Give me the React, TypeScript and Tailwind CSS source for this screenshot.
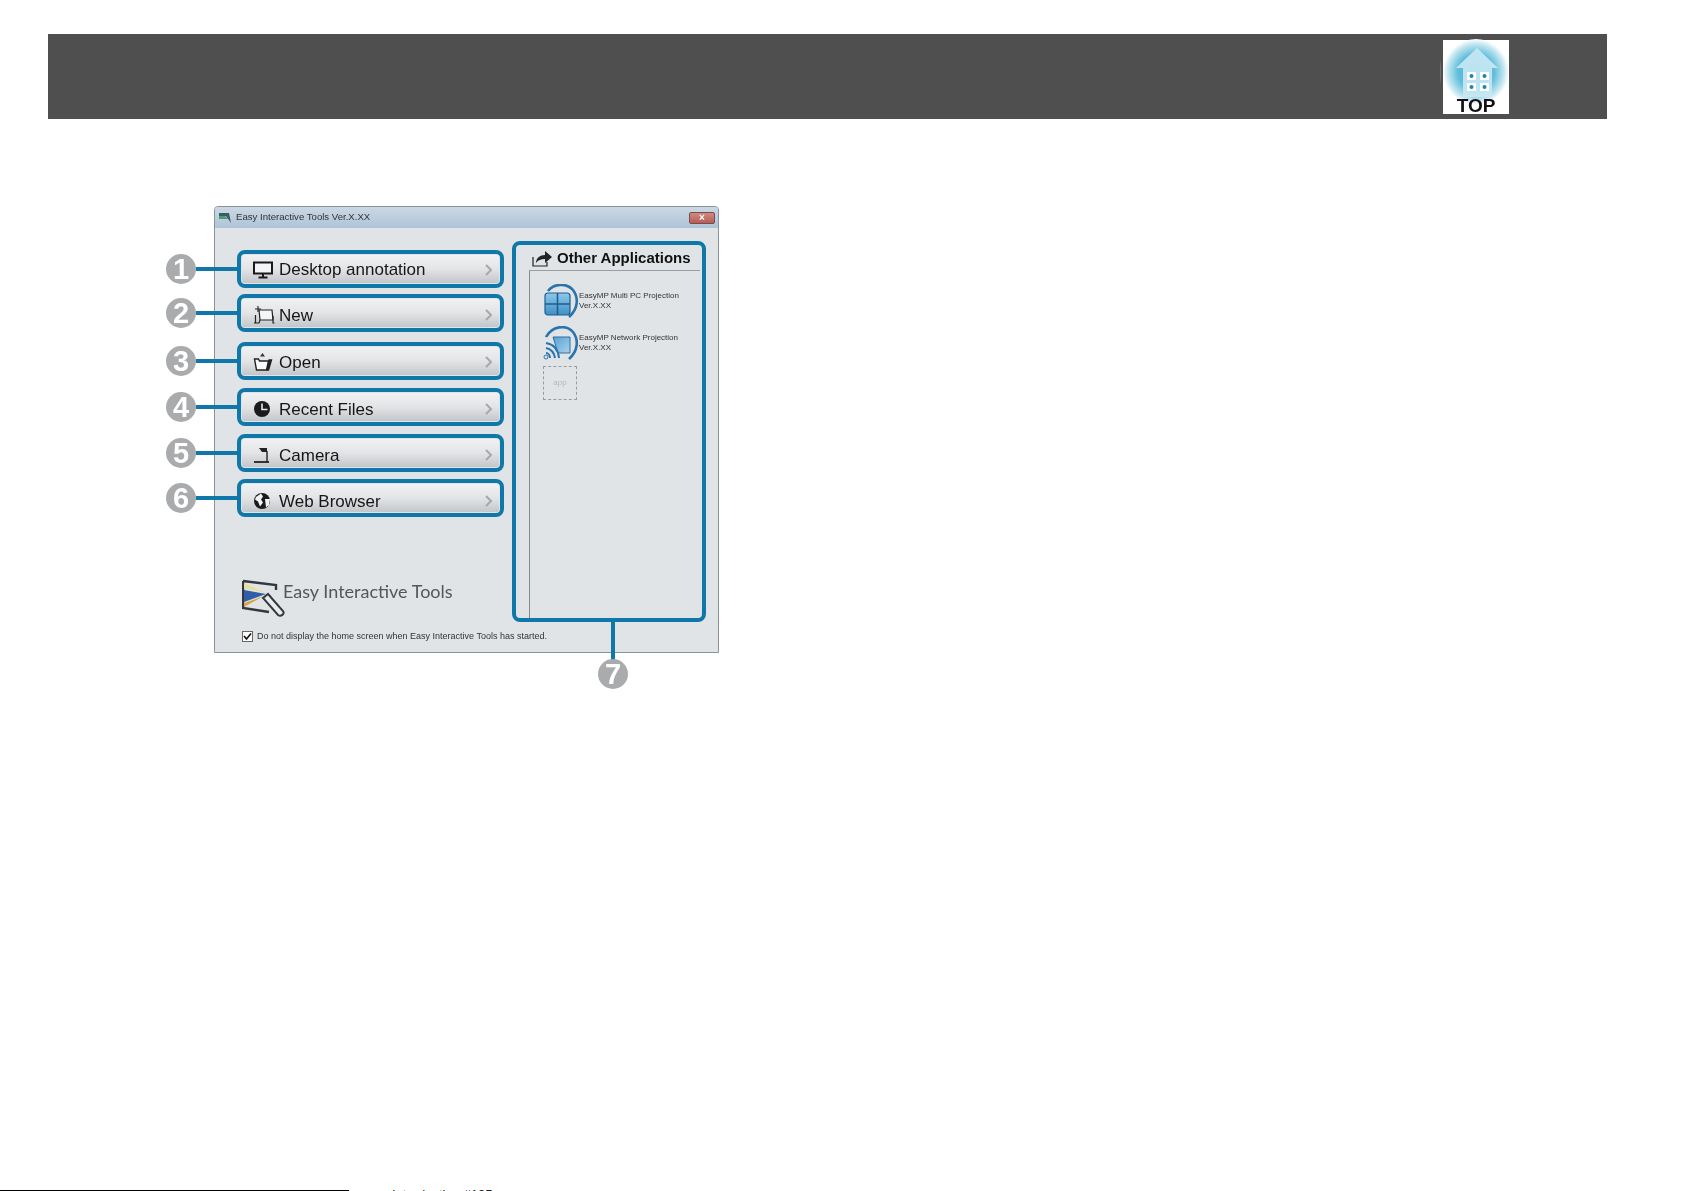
import React from "react";

const BLUE = "#0f78a8";

function Badge({ n }: { n: string }) {
  return (
    <div className="flex h-[30px] w-[30px] items-center justify-center rounded-full bg-[#a9abad] text-[29px] font-bold leading-none text-white [font-family:'Liberation_Sans',sans-serif]">
      {n}
    </div>
  );
}

function Monitor() {
  return (
    <svg width="20" height="18" viewBox="0 0 20 18" fill="none">
      <rect x="1" y="1.5" width="18" height="11" fill="#f4f5f6" stroke="#1a1a1a" strokeWidth="2" />
      <path d="M10 13v3M5.5 16.5h9" stroke="#1a1a1a" strokeWidth="2" />
    </svg>
  );
}
function NewIcon() {
  return (
    <svg width="22" height="20" viewBox="0 0 22 20" fill="none" stroke="#222" strokeWidth="1.2">
      <path d="M6 5h13l1 10H7z" fill="#f4f5f6" />
      <path d="M2.5 10v8M1 18h5l1-3M20 11v7h1.5" />
      <path d="M5 1v6M2 4h6" strokeWidth="1.1" />
    </svg>
  );
}
function OpenIcon() {
  return (
    <svg width="20" height="20" viewBox="0 0 20 20" fill="none" stroke="#222" strokeWidth="1.4">
      <path d="M1.500 7h4l1 2h9l-2 9H3.500z" fill="#fbfbfb" />
      <path d="M15.500 8h3l-3 10h-2" fill="#222" />
      <path d="M9.500 1l2.500 3.500H7z" fill="#333" stroke="none" />
    </svg>
  );
}
function Clock() {
  return (
    <svg width="18" height="18" viewBox="0 0 18 18">
      <circle cx="9" cy="9" r="8" fill="#1b1b1b" />
      <path d="M9 3.500V9.500h5.500" stroke="#e4e6e8" strokeWidth="1.6" fill="none" />
    </svg>
  );
}
function CameraIcon() {
  return (
    <svg width="18" height="18" viewBox="0 0 18 18" fill="none">
      <path d="M1 16h15" stroke="#222" strokeWidth="1.8" />
      <path d="M14 5v11" stroke="#222" strokeWidth="1.4" />
      <path d="M6 2h8v4H9z" fill="#222" />
    </svg>
  );
}
function Globe() {
  return (
    <svg width="18" height="18" viewBox="0 0 18 18">
      <circle cx="9" cy="9" r="8" fill="#1b1b1b" />
      <path d="M3 5l5-3.500 2 3-2 3 2 3-3 4-2-5-3-2zM12 7l5 0-1 6-3 2.500z" fill="#f2f3f4" />
    </svg>
  );
}

const rows = [
  { n: "1", label: "Desktop annotation", icon: <Monitor />, cls: "mt-[22px]", inner: "pt-[1px]" },
  { n: "2", label: "New", icon: <NewIcon />, cls: "mt-[6px]", inner: "pt-[4px]" },
  { n: "3", label: "Open", icon: <OpenIcon />, cls: "mt-[10px]", inner: "pt-[2px]" },
  { n: "4", label: "Recent Files", icon: <Clock />, cls: "mt-[8px]", inner: "pt-[4px]" },
  { n: "5", label: "Camera", icon: <CameraIcon />, cls: "mt-[8px]", inner: "pt-[4px]" },
  { n: "6", label: "Web Browser", icon: <Globe />, cls: "mt-[7px]", inner: "pt-[6px]" },
];

function MenuRow({ n, label, icon, cls, inner }: { n: string; label: string; icon: React.ReactNode; cls: string; inner: string }) {
  return (
    <div className={`relative h-[38px] w-[267px] rounded-[8px] border-[4px] border-[#0f78a8] p-[1px] ${cls}`}>
      <div className={`flex h-full items-center rounded-[2px] bg-gradient-to-b from-[#f0f1f2] via-[#e2e4e6] to-[#c4c7ca] pl-[11px] pr-[5px] ${inner}`}>
        <span className="flex w-[26px] shrink-0 items-center justify-start">{icon}</span>
        <span className="text-[17px] leading-none text-[#161616]">{label}</span>
        <svg className="ml-auto" width="10" height="14" viewBox="0 0 10 14" fill="none">
          <path d="M2 2l5 5-5 5" stroke="#a6a9ac" strokeWidth="2" />
        </svg>
      </div>
      <div className="absolute left-[-75px] top-[0px] flex items-center">
        <Badge n={n} />
        <div className="h-[4px] w-[41px]" style={{ background: BLUE }} />
      </div>
    </div>
  );
}

function MultiPcIcon() {
  return (
    <svg width="36" height="34" viewBox="0 0 36 34" fill="none">
      <defs>
        <linearGradient id="pcglass" x1="0" y1="0" x2="0" y2="1">
          <stop offset="0%" stopColor="#8ec9ea" />
          <stop offset="100%" stopColor="#3f8fc6" />
        </linearGradient>
      </defs>
      <path d="M5 7C11-1 24-1 30 6c6 8 5 19-4 27" stroke="#2a74ad" strokeWidth="2.6" />
      <rect x="2" y="9" width="25" height="22" rx="3" fill="url(#pcglass)" stroke="#1d5f8f" strokeWidth="1.2" />
      <path d="M14.500 9v22M2 20h25" stroke="#1d5f8f" strokeWidth="1.6" />
    </svg>
  );
}
function NetworkIcon() {
  return (
    <svg width="36" height="34" viewBox="0 0 36 34" fill="none">
      <defs>
        <linearGradient id="netglass" x1="0" y1="0" x2="1" y2="1">
          <stop offset="0%" stopColor="#5aa0d0" />
          <stop offset="100%" stopColor="#a5d3ef" />
        </linearGradient>
      </defs>
      <path d="M3 11C9 0 23-2 30 6c6 8 5 19-4 27" stroke="#2a74ad" strokeWidth="2.6" />
      <path d="M10 11h17v16H15z" fill="url(#netglass)" stroke="#2f6f9e" />
      <path d="M3 17c7 1 12 6 13 15M3 22c5 1 8 4 9 10M3 27c2 0 4 2 4 5" stroke="#2a74ad" strokeWidth="2" />
      <circle cx="3" cy="31" r="2" stroke="#2a74ad" />
    </svg>
  );
}

function TopLogo() {
  return (
    <div className="flex h-[74px] w-[66px] flex-col items-center bg-white">
      <svg width="66" height="58" viewBox="0 0 66 58" className="overflow-visible">
        <defs>
          <radialGradient id="glow" cx="50%" cy="50%" r="50%">
            <stop offset="0%" stopColor="#3fb0d2" />
            <stop offset="55%" stopColor="#62bedb" />
            <stop offset="85%" stopColor="#c3e6f1" />
            <stop offset="100%" stopColor="#ffffff" />
          </radialGradient>
        </defs>
        <path d="M-2 20c-1.500 6-1.500 18 0 24z" fill="#6e6e6e" />
        <circle cx="33" cy="32" r="33" fill="url(#glow)" />
        <path d="M34 8L13 28h7v29h29V28h6z" fill="#c9e9f3" opacity="0.9" />
        <g fill="#fff">
          <rect x="24" y="32" width="9" height="8" rx="1" />
          <rect x="37" y="32" width="9" height="8" rx="1" />
          <rect x="24" y="43" width="9" height="8" rx="1" />
          <rect x="37" y="43" width="9" height="8" rx="1" />
        </g>
        <g fill="#2283a9">
          <circle cx="28.500" cy="36" r="2" />
          <circle cx="41.500" cy="36" r="2" />
          <circle cx="28.500" cy="47" r="2" />
          <circle cx="41.500" cy="47" r="2" />
        </g>
      </svg>
      <span className="text-[19px] font-bold leading-[16px] text-[#111]">TOP</span>
    </div>
  );
}

function Brand() {
  return (
    <svg width="44" height="38" viewBox="0 0 44 38" fill="none">
      <path d="M1 2l33 4v5M1 2v27l26 4" stroke="#33383d" strokeWidth="2.4" />
      <path d="M2 11l22 4-22 8z" fill="#2f5fa8" />
      <path d="M2 4l22 10L2 9z" fill="#e7df9a" />
      <path d="M2 24l20-7-20 11z" fill="#dba24a" />
      <path d="M21 19l5-4 15 17c2 3-2 6-5 4z" fill="#e8eaec" stroke="#33383d" strokeWidth="2" />
    </svg>
  );
}

export default function App() {
  return (
    <div className="flex h-[1191px] flex-col overflow-hidden bg-white pt-[34px] [font-family:'Liberation_Sans',Arial,sans-serif]">
      <header className="ml-[48px] mr-[78px] flex h-[85px] items-center justify-end bg-[#4f4f4f] pr-[98px] blur-[0.4px]">
        <TopLogo />
      </header>

      <main className="ml-[214px] mt-[87px] flex-1">
        <section className="relative h-[447px] w-[505px] rounded-t-[4px] border border-[#8b9299] bg-[#e1e4e7] blur-[0.35px]">
          <div className="flex h-[21px] items-center rounded-t-[3px] bg-gradient-to-b from-[#cbd8e4] to-[#aec4d9] pl-[3px] pr-[3px]">
            <svg width="14" height="14" viewBox="0 0 14 14">
              <path d="M1 2h10l2 10L8 5H1z" fill="#3b5a66" />
              <path d="M1 5h6l3 3H1z" fill="#4a9c6e" />
            </svg>
            <span className="ml-[4px] text-[9.6px] text-[#333]">Easy Interactive Tools Ver.X.XX</span>
            <div className="ml-auto flex h-[12px] w-[26px] items-center justify-center rounded-[2px] border border-[#7d4a4a] bg-gradient-to-b from-[#d08a82] to-[#b45e55] text-[10px] font-bold leading-none text-white">
              ×
            </div>
          </div>

          <div className="flex h-[425px] pl-[22px]">
            <div className="flex w-[275px] shrink-0 flex-col">
              <div className="flex flex-col">
                {rows.map((r) => (
                  <MenuRow key={r.n} {...r} />
                ))}
              </div>
              <div className="mt-[62px] flex items-start pl-[5px]">
                <Brand />
                <span className="ml-[-3px] mt-[-1px] whitespace-nowrap text-[18px] leading-[26px] text-[#555] [font-family:'Lato',sans-serif]">
                  Easy Interactive Tools
                </span>
              </div>
              <div className="mt-[14px] flex w-[330px] items-center pl-[5px]">
                <div className="flex h-[11px] w-[11px] items-center justify-center border border-[#666] bg-white">
                  <svg width="9" height="9" viewBox="0 0 9 9" fill="none">
                    <path d="M1 4l2.500 3L8 1.500" stroke="#111" strokeWidth="1.6" />
                  </svg>
                </div>
                <span className="ml-[4px] whitespace-nowrap text-[9px] leading-none text-[#333]">
                  Do not display the home screen when Easy Interactive Tools has started.
                </span>
              </div>
            </div>

            <div className="relative mt-[13px] h-[381px] w-[194px] rounded-[8px] border-[4px] border-[#0f78a8] pl-[13px] pr-[2px]">
              <div className="flex h-[26px] items-center border-b border-[#9a9ea2] pl-[3px]">
                <svg width="20" height="18" viewBox="0 0 20 18" fill="none">
                  <path d="M1 8v9h14v-4" stroke="#222" strokeWidth="1.2" />
                  <path d="M4 14c0-5 4-8 9-8V2l7 6-7 6v-4c-4 0-7 1-9 4z" fill="#222" />
                </svg>
                <span className="ml-[5px] whitespace-nowrap text-[15px] font-bold leading-none text-[#111]">
                  Other Applications
                </span>
              </div>
              <div className="h-[347px] border-l border-[#85898d] pl-[13px] pt-[13px]">
                <div className="flex items-center">
                  <MultiPcIcon />
                  <span className="text-[8px] leading-[10px] text-[#333]">
                    EasyMP Multi PC Projection
                    <br />
                    Ver.X.XX
                  </span>
                </div>
                <div className="mt-[8px] flex items-center">
                  <NetworkIcon />
                  <span className="text-[8px] leading-[10px] text-[#333]">
                    EasyMP Network Projection
                    <br />
                    Ver.X.XX
                  </span>
                </div>
                <div className="mt-[6px] flex h-[34px] w-[34px] items-center justify-center border border-dashed border-[#9a9da0] text-[8px] text-[#b5b7b9]">
                  app
                </div>
              </div>
              <div className="absolute left-[82px] top-[377px] flex flex-col items-center">
                <div className="h-[38px] w-[4px]" style={{ background: BLUE }} />
                <div className="mt-[-1px]">
                  <Badge n="7" />
                </div>
              </div>
            </div>
          </div>
        </section>
      </main>

      <footer className="flex h-[1px] shrink-0 overflow-hidden">
        <div className="h-[1px] w-[349px] bg-black" />
        <span className="ml-[43px] whitespace-nowrap text-[13px] leading-[10px] text-[#222]">
          Introduction #105
        </span>
      </footer>
    </div>
  );
}
